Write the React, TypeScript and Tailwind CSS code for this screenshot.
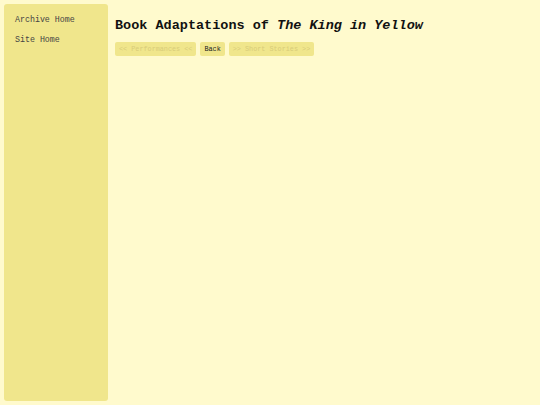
import React from 'react';

const mono = { fontFamily: '"Liberation Mono", "DejaVu Sans Mono", monospace' };

export default function App() {
    return (
        <div className="w-[540px] h-[405px] bg-[#fffacd] flex gap-[7px] p-[4px] overflow-hidden" style={mono}>
            {/* Sidebar */}
            <nav className="w-[104px] shrink-0 bg-[#f0e68c] rounded-[3px] pt-[11px] pl-[11px] flex flex-col gap-[10px] text-[8.3px] leading-[10px] text-[#444]">
                <a href="#">Archive Home</a>
                <a href="#">Site Home</a>
            </nav>

            {/* Main */}
            <main className="flex-1 pt-[14px]">
                <h1 className="text-[13.5px] leading-[16px] font-bold text-[#111]">
                    Book Adaptations of <i>The King in Yellow</i>
                </h1>
                <div className="flex gap-[4px] mt-[8px] text-[6.8px] leading-[14px]">
                    <span className="bg-[#f0e68c] rounded-[2px] px-[4px] text-[#d8cc7a]">&lt;&lt; Performances &lt;&lt;</span>
                    <span className="bg-[#f0e68c] rounded-[2px] px-[4px] text-[#222]">Back</span>
                    <span className="bg-[#f0e68c] rounded-[2px] px-[4px] text-[#d8cc7a]">&gt;&gt; Short Stories &gt;&gt;</span>
                </div>
            </main>
        </div>
    );
}
